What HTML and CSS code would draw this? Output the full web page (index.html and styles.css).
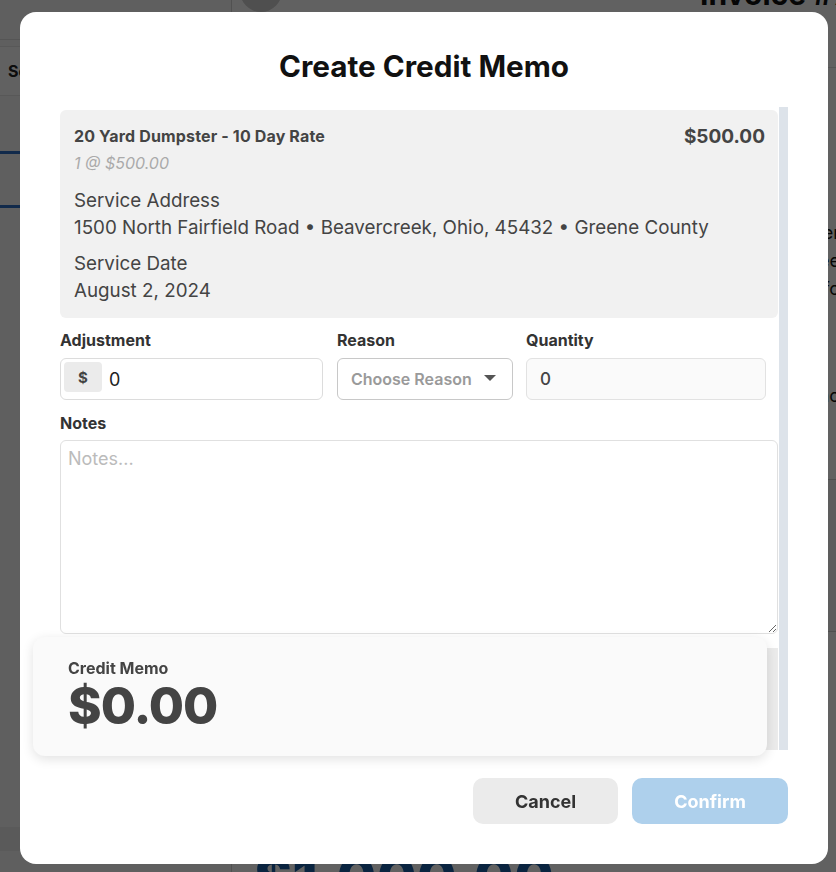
FILE: index.html
```html
<!DOCTYPE html>
<html lang="en">
<head>
<meta charset="utf-8">
<title>Create Credit Memo</title>
<link rel="stylesheet" href="styles.css">
</head>
<body>
<div class="app">
  <aside class="sidebar">
    <div class="side-top"></div>
    <div class="side-search"><span class="side-search-text">Search</span></div>
    <div class="side-tab">Invoices</div>
    <div class="side-tab">Payments</div>
    <div class="side-spacer"></div>
    <div class="side-foot"></div>
  </aside>
  <main class="main">
    <header class="main-head">
      <div class="avatar"></div>
      <div class="invoice-no">Invoice #7012345</div>
    </header>
    <section class="main-body">
      <div class="detail-col">
        <div class="detail-line">Customer</div>
        <div class="detail-line">Fee</div>
        <div class="detail-line">Info</div>
        <div class="detail-gap"></div>
        <div class="detail-line">Memo</div>
        <div class="detail-divider"></div>
        <div class="detail-band"></div>
        <div class="detail-title">Activity</div>
      </div>
    </section>
    <div class="main-total">$1,000.00</div>
  </main>
</div>

<div class="overlay"></div>

<div class="modal">
  <h1 class="modal-title">Create Credit Memo</h1>
  <div class="scroll">
    <div class="scroll-content">
      <div class="item-card">
        <div class="item-head">
          <div class="item-name">20 Yard Dumpster - 10 Day Rate</div>
          <div class="item-price">$500.00</div>
        </div>
        <div class="item-qty">1 @ $500.00</div>
        <div class="item-section">
          <div class="item-label">Service Address</div>
          <div class="item-value">1500 North Fairfield Road • Beavercreek, Ohio, 45432 • Greene County</div>
        </div>
        <div class="item-section item-section-date">
          <div class="item-label">Service Date</div>
          <div class="item-value">August 2, 2024</div>
        </div>
      </div>

      <div class="field-row">
        <div class="field">
          <label class="field-label">Adjustment</label>
          <div class="money-input">
            <span class="addon">$</span>
            <input class="money-value" type="text" value="0">
          </div>
        </div>
        <div class="field">
          <label class="field-label">Reason</label>
          <div class="select">
            <span class="select-text">Choose Reason</span>
            <span class="caret"></span>
          </div>
        </div>
        <div class="field">
          <label class="field-label">Quantity</label>
          <input class="qty-input" type="text" value="0">
        </div>
      </div>

      <label class="field-label notes-label">Notes</label>
      <textarea class="notes" placeholder="Notes..."></textarea>

      <div class="under-band"></div>
    </div>
    <div class="scrollbar"></div>
  </div>

  <div class="memo-box">
    <div class="memo-label">Credit Memo</div>
    <div class="memo-amount">$0.00</div>
  </div>

  <div class="actions">
    <button class="btn btn-cancel">Cancel</button>
    <button class="btn btn-confirm">Confirm</button>
  </div>
</div>
</body>
</html>
```

FILE: styles.css
```css
* { box-sizing: border-box; }

html, body {
  margin: 0;
  padding: 0;
  width: 836px;
  height: 872px;
  overflow: hidden;
  font-family: Inter, "Noto Sans", sans-serif;
}

/* ---------- background page ---------- */
.app {
  display: grid;
  grid-template-columns: 232px 1fr;
  height: 872px;
  background: #ffffff;
}

.sidebar {
  display: flex;
  flex-direction: column;
  border-right: 1px solid #d6d6d6;
  background: #fafafa;
}
.side-top {
  height: 40px;
  border-bottom: 1px solid #e0e0e0;
}
.side-search {
  height: 50px;
  margin-top: 6px;
  border-top: 1px solid #e6e6e6;
  border-bottom: 1px solid #e6e6e6;
  background: #ffffff;
  display: flex;
  align-items: center;
  padding-left: 8px;
}
.side-search-text {
  font-size: 16px;
  font-weight: 700;
  color: #222;
}
.side-tab {
  height: 58px;
  border-bottom: 3px solid #2f6fc4;
  color: transparent;
  font-size: 14px;
}
.side-tab + .side-tab {
  height: 54px;
}
.side-spacer { flex: 1; }
.side-foot {
  height: 24px;
  margin-bottom: 21px;
  background: #ececec;
}

.main {
  display: flex;
  flex-direction: column;
  overflow: hidden;
}
.main-head {
  height: 98px;
  margin-top: -30px;
  display: flex;
  align-items: flex-start;
  padding-left: 8px;
  border-bottom: 1px solid #e0e0e0;
}
.avatar {
  flex: none;
  width: 42px;
  height: 42px;
  border-radius: 50%;
  background: #cfcfcf;
}
.invoice-no {
  flex: none;
  font-size: 30px;
  line-height: 36px;
  font-weight: 700;
  color: #111;
  margin-left: 418px;
  margin-top: 6px;
  white-space: nowrap;
}
.main-body {
  flex: 1;
  display: flex;
  justify-content: flex-end;
}
.detail-col {
  width: 100px;
  margin-right: -4px;
  padding-top: 151px;
  font-size: 18px;
  color: #111;
  text-align: right;
}
.detail-line {
  line-height: 28px;
  white-space: nowrap;
}
.detail-gap { height: 79px; }
.detail-divider {
  height: 1px;
  background: #d0d0d0;
  margin-top: 69px;
}
.detail-band {
  height: 152px;
  background: #f4f4f4;
  border-bottom: 1px solid #d0d0d0;
}
.detail-title {
  font-weight: 700;
  font-size: 18px;
  margin-top: 20px;
  margin-right: 18px;
}
.main-total {
  font-size: 58px;
  font-weight: 800;
  color: #1b5fa8;
  padding-left: 22px;
  height: 26px;
  line-height: 64px;
  white-space: nowrap;
}

.overlay {
  position: fixed;
  inset: 0;
  background: rgba(0, 0, 0, 0.62);
}

/* ---------- modal ---------- */
.modal {
  position: fixed;
  left: 20px;
  top: 12px;
  width: 808px;
  height: 852px;
  background: #ffffff;
  border-radius: 16px;
  padding: 37px 40px 40px;
  display: flex;
  flex-direction: column;
  color: #444;
}
.modal-title {
  margin: 0 0 24px;
  font-size: 29.7px;
  line-height: 34px;
  font-weight: 700;
  color: #111;
  text-align: center;
}

.scroll {
  display: flex;
  height: 643px;
  gap: 1px;
}
.scroll-content {
  width: 718px;
  padding-top: 3px;
  display: flex;
  flex-direction: column;
}
.scrollbar {
  width: 9px;
  background: #dde3ea;
}

.item-card {
  background: #f1f1f1;
  border-radius: 6px;
  padding: 12px 13px 14px 14px;
}
.item-head {
  display: flex;
  justify-content: space-between;
  align-items: center;
  height: 28px;
}
.item-name {
  font-size: 16px;
  letter-spacing: 0.15px;
  font-weight: 700;
  color: #444;
}
.item-price {
  font-size: 19px;
  font-weight: 700;
  color: #444;
}
.item-qty {
  font-size: 16px;
  font-style: italic;
  color: #aaa;
  line-height: 27px;
}
.item-section { margin-top: 10px; }
.item-section-date { margin-top: 9px; }
.item-label,
.item-value {
  font-size: 18.8px;
  line-height: 27px;
  color: #444;
}

.field-row {
  display: grid;
  grid-template-columns: 263px 176px 239px;
  column-gap: 14px;
  margin-top: 12px;
}
.field-row .field:nth-child(3) { margin-left: -1px; }
.field {
  display: flex;
  flex-direction: column;
}
.field-label {
  display: block;
  font-size: 16px;
  font-weight: 700;
  color: #333;
  line-height: 20px;
  margin-bottom: 8px;
}

.money-input {
  height: 42px;
  border: 1px solid #dcdcdc;
  border-radius: 6px;
  padding: 3px;
  display: flex;
  align-items: flex-start;
  background: #fff;
}
.addon {
  width: 38px;
  height: 30px;
  background: #ebebeb;
  border-radius: 4px;
  display: flex;
  align-items: center;
  justify-content: center;
  font-size: 15px;
  font-weight: 700;
  color: #444;
}
.money-value {
  border: 0;
  outline: 0;
  background: transparent;
  font-family: inherit;
  font-size: 18px;
  color: #222;
  padding: 0 0 0 7px;
  height: 34px;
  width: 200px;
}

.select {
  height: 42px;
  border: 1px solid #c8c8c8;
  border-radius: 6px;
  display: flex;
  align-items: center;
  justify-content: space-between;
  padding: 0 16px 0 13px;
  background: #fff;
}
.select-text {
  font-size: 16px;
  font-weight: 600;
  color: #9a9a9a;
}
.caret {
  width: 0;
  height: 0;
  border-left: 6px solid transparent;
  border-right: 6px solid transparent;
  border-top: 6px solid #555;
  margin-top: -2px;
}

.qty-input {
  height: 42px;
  border: 1px solid #e2e2e2;
  border-radius: 6px;
  background: #fafafa;
  font-family: inherit;
  font-size: 17px;
  font-weight: 500;
  color: #444;
  padding: 0 13px;
  outline: 0;
  width: 100%;
}

.notes-label {
  margin-top: 13px;
  margin-bottom: 7px;
}
.notes {
  width: 718px;
  height: 194px;
  border: 1px solid #e0e0e0;
  border-radius: 6px;
  padding: 7px 7px;
  font-family: inherit;
  font-size: 18px;
  line-height: 22px;
  color: #444;
  resize: vertical;
  outline: 0;
}
.notes::placeholder { color: #bbb; }

.under-band {
  margin-top: 14px;
  flex: 1;
  background: #ebebeb;
  border-radius: 8px 0 0 0;
}

.memo-box {
  position: absolute;
  left: 13px;
  top: 625px;
  width: 734px;
  height: 119px;
  background: #fafafa;
  border-radius: 12px;
  box-shadow: 0 3px 12px rgba(0, 0, 0, 0.12);
  padding: 21px 35px;
}
.memo-label {
  font-size: 16px;
  font-weight: 700;
  color: #444;
  line-height: 20px;
}
.memo-amount {
  font-size: 51px;
  font-weight: 800;
  color: #444;
  line-height: 56px;
  letter-spacing: -1px;
}

.actions {
  margin-top: 28px;
  display: flex;
  justify-content: flex-end;
  gap: 14px;
}
.btn {
  height: 46px;
  border: 0;
  border-radius: 10px;
  font-family: inherit;
  font-size: 18px;
  font-weight: 700;
}
.btn-cancel {
  width: 145px;
  background: #ebebeb;
  color: #333;
}
.btn-confirm {
  width: 156px;
  background: #aed0ec;
  color: #ffffff;
}
```
